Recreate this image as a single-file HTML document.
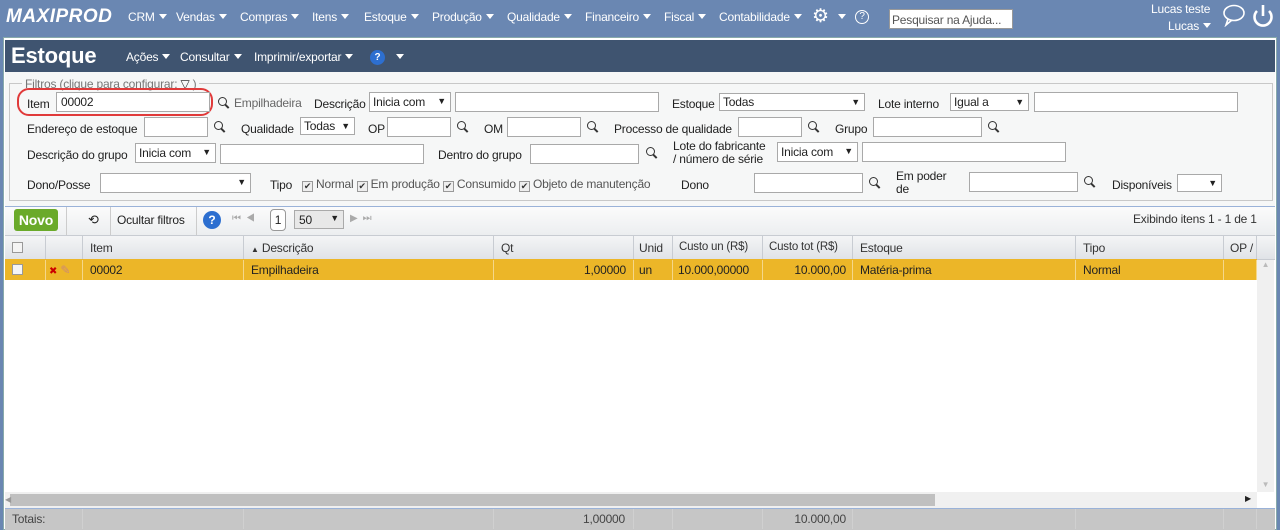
<!DOCTYPE html>
<html><head><meta charset="utf-8"><style>
*{box-sizing:border-box;margin:0;padding:0}
body{width:1280px;height:530px;overflow:hidden;background:#6a87b2;font-family:"Liberation Sans",sans-serif;font-size:12px;letter-spacing:-0.2px;color:#222;position:relative}
.a{position:absolute;white-space:nowrap}
.nav{color:#fff;font-size:12px;top:10px}
.tri{display:inline-block;width:0;height:0;border-left:4px solid transparent;border-right:4px solid transparent;border-top:5px solid currentColor;vertical-align:2px;margin-left:4px}
.inp{position:absolute;background:#fff;border:1px solid #a9a9a9;height:20px;font-size:12px;padding:2px 4px;white-space:nowrap}
.sel{position:absolute;background:#fff;border:1px solid #a9a9a9;height:20px;font-size:12px;padding:2px 3px;white-space:nowrap}
.sel:after{content:"▼";position:absolute;right:4px;top:3px;font-size:9px}
.lbl{position:absolute;font-size:12px;color:#222;white-space:nowrap}
.mag{position:absolute;width:9px;height:9px;border:1.5px solid #333;border-radius:50%}
.mag:after{content:"";position:absolute;width:1.5px;height:5px;background:#333;left:7px;top:6px;transform:rotate(-45deg)}
.th{position:absolute;top:236px;height:23px;border-right:1px solid #c8ccd2;padding:5px 7px;font-size:12px;color:#333;white-space:nowrap;overflow:hidden}
.td{position:absolute;top:260px;height:20px;border-right:1px solid #f5d78a;padding:3px 7px;font-size:12px;white-space:nowrap;overflow:hidden}
.ft{position:absolute;top:509px;height:20px;border-right:1px solid #d0d0d0}
.cb{display:inline-block;width:11px;height:11px;border:1px solid #999;background:#eee;vertical-align:-1px;font-size:9px;line-height:9px;text-align:center;color:#333;margin-right:3px}
</style></head><body>
<div class="a" style="left:6px;top:6px;color:#fff;font-weight:bold;font-style:italic;font-size:19px;letter-spacing:0.5px">MAXIPROD</div>
<div class="a nav" style="left:128px">CRM<span class="tri"></span></div>
<div class="a nav" style="left:176px">Vendas<span class="tri"></span></div>
<div class="a nav" style="left:240px">Compras<span class="tri"></span></div>
<div class="a nav" style="left:312px">Itens<span class="tri"></span></div>
<div class="a nav" style="left:364px">Estoque<span class="tri"></span></div>
<div class="a nav" style="left:432px">Produção<span class="tri"></span></div>
<div class="a nav" style="left:507px">Qualidade<span class="tri"></span></div>
<div class="a nav" style="left:585px">Financeiro<span class="tri"></span></div>
<div class="a nav" style="left:664px">Fiscal<span class="tri"></span></div>
<div class="a nav" style="left:719px">Contabilidade<span class="tri"></span></div>
<div class="a" style="left:812px;top:5px;color:#fff;font-size:19px">⚙</div>
<div class="a nav" style="left:834px"><span class="tri"></span></div>
<div class="a" style="left:855px;top:10px;width:14px;height:14px;border:1.5px solid #fff;border-radius:50%;color:#fff;font-size:10px;text-align:center;line-height:11px">?</div>
<div class="a" style="left:889px;top:9px;width:124px;height:20px;background:#fff;border:1px solid #999;color:#555;padding:3px 2px;font-size:12px">Pesquisar na Ajuda...</div>
<div class="a" style="left:1151px;top:2px;color:#fff;font-size:12px">Lucas teste</div>
<div class="a" style="left:1168px;top:19px;color:#fff;font-size:12px">Lucas<span class="tri"></span></div>
<svg class="a" style="left:1220px;top:3px" width="28" height="24"><ellipse cx="14" cy="10" rx="10" ry="7.5" fill="none" stroke="#fff" stroke-width="1.6"/><path d="M8 16 L6 22 L12 17" fill="none" stroke="#fff" stroke-width="1.6"/></svg>
<svg class="a" style="left:1250px;top:3px" width="26" height="26"><path d="M7 8 A8.5 8.5 0 1 0 19 8" fill="none" stroke="#fff" stroke-width="2.6"/><line x1="13" y1="2" x2="13" y2="13" stroke="#fff" stroke-width="2.6"/></svg>

<div class="a" style="left:3px;top:37px;width:1274px;height:493px;background:#fff;border:1px solid #8aa"></div>
<div class="a" style="left:5px;top:40px;width:1270px;height:32px;background:#3f5470"></div>
<div class="a" style="left:11px;top:43px;color:#fff;font-weight:bold;font-size:22px">Estoque</div>
<div class="a" style="left:126px;top:50px;color:#fff">Ações<span class="tri"></span></div>
<div class="a" style="left:180px;top:50px;color:#fff">Consultar<span class="tri"></span></div>
<div class="a" style="left:254px;top:50px;color:#fff">Imprimir/exportar<span class="tri"></span></div>
<div class="a" style="left:370px;top:50px;width:15px;height:15px;border-radius:50%;background:#2d6fd0;color:#fff;font-weight:bold;font-size:10px;text-align:center;line-height:15px">?</div>
<div class="a" style="left:392px;top:50px;color:#fff"><span class="tri"></span></div>

<div class="a" style="left:5px;top:72px;width:1270px;height:134px;background:#f6f7f7"></div>
<div class="a" style="left:9px;top:83px;width:1264px;height:118px;border:1px solid #c8c8c8"></div>
<div class="a" style="left:22px;top:77px;background:#f6f7f7;color:#777;padding:0 3px">Filtros (clique para configurar: <span style="color:#333">▽</span> )</div>

<div class="a" style="left:17px;top:88px;width:196px;height:28px;border:2px solid #e03a3a;border-radius:12px"></div>
<div class="lbl" style="left:27px;top:97px">Item</div>
<div class="inp" style="left:56px;top:92px;width:154px">00002</div>
<div class="mag" style="left:218px;top:97px"></div>
<div class="lbl" style="left:234px;top:96px;color:#666">Empilhadeira</div>
<div class="lbl" style="left:314px;top:97px">Descrição</div>
<div class="sel" style="left:369px;top:92px;width:82px">Inicia com</div>
<div class="inp" style="left:455px;top:92px;width:204px"></div>
<div class="lbl" style="left:672px;top:97px">Estoque</div>
<div class="sel" style="left:719px;top:93px;width:146px;height:18px;padding-top:1px">Todas</div>
<div class="lbl" style="left:878px;top:97px">Lote interno</div>
<div class="sel" style="left:950px;top:93px;width:79px;height:18px;padding-top:1px">Igual a</div>
<div class="inp" style="left:1034px;top:92px;width:204px"></div>

<div class="lbl" style="left:27px;top:122px">Endereço de estoque</div>
<div class="inp" style="left:144px;top:117px;width:64px"></div>
<div class="mag" style="left:214px;top:121px"></div>
<div class="lbl" style="left:241px;top:122px">Qualidade</div>
<div class="sel" style="left:300px;top:117px;width:55px;height:18px;padding-top:1px">Todas</div>
<div class="lbl" style="left:368px;top:122px">OP</div>
<div class="inp" style="left:387px;top:117px;width:64px"></div>
<div class="mag" style="left:457px;top:121px"></div>
<div class="lbl" style="left:484px;top:122px">OM</div>
<div class="inp" style="left:507px;top:117px;width:74px"></div>
<div class="mag" style="left:587px;top:121px"></div>
<div class="lbl" style="left:614px;top:122px">Processo de qualidade</div>
<div class="inp" style="left:738px;top:117px;width:64px"></div>
<div class="mag" style="left:808px;top:121px"></div>
<div class="lbl" style="left:835px;top:122px">Grupo</div>
<div class="inp" style="left:873px;top:117px;width:109px"></div>
<div class="mag" style="left:988px;top:121px"></div>

<div class="lbl" style="left:27px;top:148px">Descrição do grupo</div>
<div class="sel" style="left:135px;top:143px;width:81px">Inicia com</div>
<div class="inp" style="left:220px;top:144px;width:204px"></div>
<div class="lbl" style="left:438px;top:148px">Dentro do grupo</div>
<div class="inp" style="left:530px;top:144px;width:109px"></div>
<div class="mag" style="left:646px;top:147px"></div>
<div class="lbl" style="left:673px;top:140px;line-height:13px">Lote do fabricante<br>/ número de série</div>
<div class="sel" style="left:777px;top:142px;width:81px">Inicia com</div>
<div class="inp" style="left:862px;top:142px;width:204px"></div>

<div class="lbl" style="left:27px;top:178px">Dono/Posse</div>
<div class="sel" style="left:100px;top:173px;width:151px"></div>
<div class="lbl" style="left:270px;top:178px">Tipo</div>
<div class="lbl" style="left:302px;top:177px;color:#555"><span class="cb">✔</span>Normal <span class="cb">✔</span>Em produção <span class="cb">✔</span>Consumido <span class="cb">✔</span>Objeto de manutenção</div>
<div class="lbl" style="left:681px;top:178px">Dono</div>
<div class="inp" style="left:754px;top:173px;width:109px"></div>
<div class="mag" style="left:869px;top:177px"></div>
<div class="lbl" style="left:896px;top:170px;line-height:13px">Em poder<br>de</div>
<div class="inp" style="left:969px;top:172px;width:109px"></div>
<div class="mag" style="left:1084px;top:176px"></div>
<div class="lbl" style="left:1112px;top:178px">Disponíveis</div>
<div class="sel" style="left:1177px;top:174px;width:45px;height:18px"></div>

<div class="a" style="left:5px;top:206px;width:1270px;height:30px;background:linear-gradient(#fbfbfb,#eceef0);border-top:1px solid #9ab2d8;border-bottom:1px solid #c8ccd2"></div>
<div class="a" style="left:14px;top:209px;width:44px;height:22px;background:#6aaa2a;border-radius:3px;color:#fff;font-weight:bold;font-size:14px;text-align:center;line-height:22px">Novo</div>
<div class="a" style="left:66px;top:207px;width:1px;height:28px;background:#ccc"></div>
<div class="a" style="left:88px;top:212px;font-size:13px">⟲</div>
<div class="a" style="left:110px;top:207px;width:1px;height:28px;background:#ccc"></div>
<div class="a" style="left:117px;top:213px">Ocultar filtros</div>
<div class="a" style="left:196px;top:207px;width:1px;height:28px;background:#ccc"></div>
<div class="a" style="left:203px;top:211px;width:18px;height:18px;border-radius:50%;background:#2d6fd0;color:#fff;font-weight:bold;font-size:12px;text-align:center;line-height:18px">?</div>
<div class="a" style="left:232px;top:213px;color:#aaa;font-size:10px">⏮ &nbsp;◀</div>
<div class="a" style="left:270px;top:209px;width:16px;height:22px;border:1px solid #999;border-radius:4px;background:#fff;text-align:center;line-height:20px">1</div>
<div class="a" style="left:294px;top:210px;width:50px;height:19px;border:1px solid #aaa;background:#e8e8e8;padding:2px 4px">50<span style="position:absolute;right:4px;top:2px;font-size:9px">▼</span></div>
<div class="a" style="left:350px;top:213px;color:#aaa;font-size:10px">▶ &nbsp;⏭</div>
<div class="a" style="left:1133px;top:212px;color:#333">Exibindo itens 1 - 1 de 1</div>

<div class="a" style="left:5px;top:236px;width:1270px;height:24px;background:linear-gradient(#f4f5f6,#e0e3e7);border-bottom:1px solid #c8ccd2"></div>
<div class="th" style="left:5px;width:41px"><span class="cb" style="background:#f4f4f4"></span></div>
<div class="th" style="left:46px;width:37px"></div>
<div class="th" style="left:83px;width:161px">Item</div>
<div class="th" style="left:244px;width:250px"><span style="font-size:8px">▲</span> Descrição</div>
<div class="th" style="left:494px;width:140px">Qt</div>
<div class="th" style="left:634px;width:39px;padding:5px 5px">Unid</div>
<div class="th" style="left:673px;width:90px;padding:5px 6px;font-size:11.5px">Custo un (R$)</div>
<div class="th" style="left:763px;width:90px;padding:5px 6px;font-size:11.5px">Custo tot (R$)</div>
<div class="th" style="left:853px;width:223px">Estoque</div>
<div class="th" style="left:1076px;width:148px">Tipo</div>
<div class="th" style="left:1224px;width:33px;padding:5px 6px">OP /</div>

<div class="a" style="left:5px;top:259px;width:1252px;height:21px;background:#ecb628"></div>
<div class="td" style="left:5px;width:41px"><span class="cb" style="background:#f4f4f4"></span></div>
<div class="td" style="left:46px;width:37px;padding:3px 3px"><span style="color:#c00;font-size:10px">✖</span> <span style="color:#c87">✎</span></div>
<div class="td" style="left:83px;width:161px">00002</div>
<div class="td" style="left:244px;width:250px">Empilhadeira</div>
<div class="td" style="left:494px;width:140px;text-align:right">1,00000</div>
<div class="td" style="left:634px;width:39px;padding:3px 5px">un</div>
<div class="td" style="left:673px;width:90px;padding:3px 5px">10.000,00000</div>
<div class="td" style="left:763px;width:90px;text-align:right;padding:3px 6px">10.000,00</div>
<div class="td" style="left:853px;width:223px">Matéria-prima</div>
<div class="td" style="left:1076px;width:148px">Normal</div>
<div class="td" style="left:1224px;width:33px"></div>

<div class="a" style="left:1257px;top:260px;width:17px;height:232px;background:#f0f0f0;color:#bbb;font-size:8px;text-align:center">▲</div>
<div class="a" style="left:1257px;top:480px;color:#bbb;font-size:8px;width:17px;text-align:center">▼</div>
<div class="a" style="left:5px;top:492px;width:1252px;height:16px;background:#f0f0f0"></div>
<div class="a" style="left:10px;top:494px;width:925px;height:12px;background:#c0c0c0"></div>
<div class="a" style="left:5px;top:495px;font-size:8px;color:#999">◀</div>
<div class="a" style="left:1245px;top:494px;font-size:8px">▶</div>
<div class="a" style="left:5px;top:508px;width:1270px;height:22px;background:#c6c6c6;border-top:1px solid #9ab2d8"></div>
<div class="a" style="left:12px;top:512px;color:#444">Totais:</div>
<div class="ft" style="left:33px;width:50px"></div><div class="ft" style="left:83px;width:161px"></div><div class="ft" style="left:244px;width:250px"></div>
<div class="ft" style="left:494px;width:140px;padding:3px 8px;text-align:right;color:#444">1,00000</div>
<div class="ft" style="left:634px;width:39px"></div><div class="ft" style="left:673px;width:90px"></div>
<div class="ft" style="left:763px;width:90px;padding:3px 6px;text-align:right;color:#444">10.000,00</div>
<div class="ft" style="left:853px;width:223px"></div><div class="ft" style="left:1076px;width:148px"></div><div class="ft" style="left:1224px;width:33px"></div>
</body></html>
